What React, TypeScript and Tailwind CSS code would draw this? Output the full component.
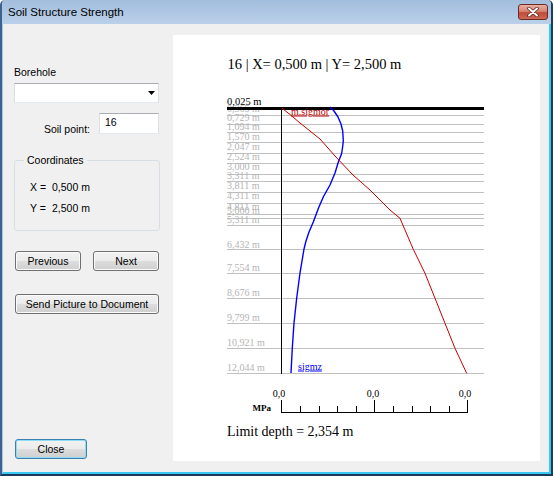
import clsx from 'clsx'

const gridRows = [115, 124, 132, 142, 153, 163, 174, 181, 192, 203, 214, 218, 225, 249, 273, 298, 323, 348, 373]

const depthLabels: [string, number][] = [
  ['0,365 m', 112],
  ['0,729 m', 121],
  ['1,094 m', 130],
  ['1,570 m', 139.5],
  ['2,047 m', 150],
  ['2,524 m', 160],
  ['3,000 m', 170],
  ['3,311 m', 178.5],
  ['3,811 m', 188.5],
  ['4,311 m', 198.5],
  ['4,811 m', 210],
  ['5,000 m', 213.5],
  ['5,311 m', 222.5],
  ['6,432 m', 247.5],
  ['7,554 m', 270.5],
  ['8,676 m', 295.5],
  ['9,799 m', 321],
  ['10,921 m', 346],
  ['12,044 m', 370.5],
]

// sigmz curve (blue) and m.sigmor curve (red), traced from the plot
const sigmz =
  '330,107 334,111 338,117 341,124 342.7,131 343.3,141 342.5,148 341.5,154 338.5,161.5 335,173 330,185 323.5,196.5 318.5,208 313.5,221.5 309,232 306,241 304,249 300,273 296.7,298 294,323 292.3,348 291,373'
const sigmor =
  '281.7,108 290,114.5 300,123 310,131 320,139 335,156 353,175 370,190 390,210 400,218.3 405,230 413.3,249.3 425,273.3 435,298.3 445,323.3 455,348.3 466.7,373.3'

const serif = '"Liberation Serif", "Times New Roman", serif'

function StrengthChart() {
  const minorTicks = [1, 2, 3, 4, 6, 7, 8, 9].map((i) => Math.round(281.5 + i * 18.6) + 0.5)
  return (
    <svg width={367} height={426} viewBox="173 35 367 426" fontFamily={serif}>
      <text x={227.5} y={69} fontSize={14.5} fill="#000">
        16 | X= 0,500 m | Y= 2,500 m
      </text>

      {gridRows.map((y) => (
        <line key={y} x1={227} x2={484} y1={y + 0.5} y2={y + 0.5} stroke="#c0c0c0" strokeWidth={1} />
      ))}
      {depthLabels.map(([t, y]) => (
        <text key={t} x={227} y={y} fontSize={10} fill="#b4b4b4">
          {t}
        </text>
      ))}

      <text x={227} y={105} fontSize={10.5} fill="#000">
        0,025 m
      </text>
      <rect x={227} y={107} width={257} height={3} fill="#000" />
      <line x1={281.5} x2={281.5} y1={107} y2={374} stroke="#000" strokeWidth={1} />

      <polyline points={sigmz} fill="none" stroke="#0000ff" strokeWidth={1.4} strokeLinejoin="round" />
      <polyline points={sigmor} fill="none" stroke="#c80000" strokeWidth={1} strokeLinejoin="round" />

      <text x={291} y={114.5} fontSize={10} fill="#c00000" textDecoration="underline">
        m.sigmor
      </text>
      <text x={298} y={369.5} fontSize={10} fill="#0000ff" textDecoration="underline">
        sigmz
      </text>

      {/* stress scale */}
      <line x1={281.5} x2={467.5} y1={412.5} y2={412.5} stroke="#000" />
      {[281.5, 374.5, 467.5].map((x) => (
        <line key={x} x1={x} x2={x} y1={400} y2={413} stroke="#000" />
      ))}
      {minorTicks.map((x) => (
        <line key={x} x1={x} x2={x} y1={406} y2={413} stroke="#000" />
      ))}
      {[279, 373, 465].map((x) => (
        <text key={x} x={x} y={396.5} fontSize={10} textAnchor="middle" fill="#000">
          0,0
        </text>
      ))}
      <text x={252.5} y={411} fontSize={9} fontWeight="bold" fill="#000">
        MPa
      </text>

      <text x={227} y={436} fontSize={14} fill="#000">
        Limit depth = 2,354 m
      </text>
    </svg>
  )
}

function WinButton({
  children,
  className,
  primary,
}: {
  children: React.ReactNode
  className?: string
  primary?: boolean
}) {
  return (
    <button
      className={clsx(
        'h-[20px] flex items-center justify-center rounded-[3px] border text-[10.5px] leading-none text-black bg-[linear-gradient(#f2f2f2,#ebebeb_50%,#dddddd_50%,#cfcfcf)]',
        primary
          ? 'border-[#3c7fb1] shadow-[inset_0_0_0_1px_#8fdcf7]'
          : 'border-[#707070] shadow-[inset_0_0_0_1px_#fbfbfb]',
        className,
      )}
    >
      {children}
    </button>
  )
}

export default function App() {
  return (
    <div className="w-[554px] h-[477px] bg-white pr-px pb-px font-['Liberation_Sans',Arial,sans-serif] text-black">
      <div className="h-full flex flex-col border-l-2 border-r-2 border-b-2 border-l-[#3d6290] border-r-[#1f3b5c] border-b-[#1f3b5c] rounded-tl-[5px] rounded-tr-[5px] overflow-hidden">
        {/* title bar */}
        <div className="h-[24px] shrink-0 flex justify-between bg-[linear-gradient(#a3bddd,#bad0ea)] pl-[6px] pr-[3px]">
          <span className="text-[11.5px] leading-[24px]">Soil Structure Strength</span>
          <div className="mt-[4px] w-[30px] h-[16px] rounded-[3px] border border-[#6b2b22] bg-[linear-gradient(#eab0a2,#d68572_45%,#c24a38_55%,#cc6a56)] flex items-center justify-center">
            <svg width={12} height={10} viewBox="0 0 12 10">
              <path d="M2 1.5 L10 8.5 M10 1.5 L2 8.5" stroke="#5b2a22" strokeWidth={3.6} strokeLinecap="round" />
              <path d="M2 1.5 L10 8.5 M10 1.5 L2 8.5" stroke="#fff" strokeWidth={2} strokeLinecap="round" />
            </svg>
          </div>
        </div>

        {/* client area */}
        <div className="flex-1 flex bg-[#f0f0f0] border-l border-r-2 border-b-2 border-l-[#a9c6e6] border-r-[#38c8f0] border-b-[#38c8f0]">
          <div className="w-[170px] shrink-0 pl-[11px] pb-[13px] flex flex-col text-[10.5px]">
            <div className="mt-[42px] leading-[13px]">Borehole</div>
            <div className="mt-[4px] w-[145px] h-[20px] bg-white border border-[#abadb3] border-l-[#dbdfe6] border-r-[#dbdfe6] border-b-[#e3e9ef] flex items-center justify-end pr-[3px]">
              <svg width={7} height={4} viewBox="0 0 7 4">
                <polygon points="0,0 7,0 3.5,4" fill="#000" />
              </svg>
            </div>

            <div className="mt-[10px] w-[145px] flex justify-end">
              <span className="pt-[10px] leading-[13px] mr-[9px]">Soil point:</span>
              <div className="w-[60px] h-[21px] bg-white border border-[#abadb3] border-l-[#dbdfe6] border-r-[#dbdfe6] border-b-[#e3e9ef] pl-[5px] pt-[2px] leading-[13px]">
                16
              </div>
            </div>

            <fieldset className="mt-[18px] w-[146px] h-[77px] border border-[#d5dfe5] rounded-[3px]">
              <legend className="ml-[9px] px-[3px] leading-[13px]">Coordinates</legend>
              <div className="mt-[14px] pl-[15px] flex leading-[13px]">
                <span className="w-[22px]">X =</span>
                <span>0,500 m</span>
              </div>
              <div className="mt-[8px] pl-[15px] flex leading-[13px]">
                <span className="w-[22px]">Y =</span>
                <span>2,500 m</span>
              </div>
            </fieldset>

            <div className="mt-[20px] flex">
              <WinButton className="ml-px w-[66px]">Previous</WinButton>
              <WinButton className="ml-[12px] w-[66px]">Next</WinButton>
            </div>
            <WinButton className="mt-[23px] ml-px w-[144px]">Send Picture to Document</WinButton>

            <WinButton primary className="mt-auto ml-px w-[72px]">
              Close
            </WinButton>
          </div>

          <div className="mt-[11px] w-[367px] h-[426px] bg-white shrink-0">
            <StrengthChart />
          </div>
        </div>
      </div>
    </div>
  )
}
